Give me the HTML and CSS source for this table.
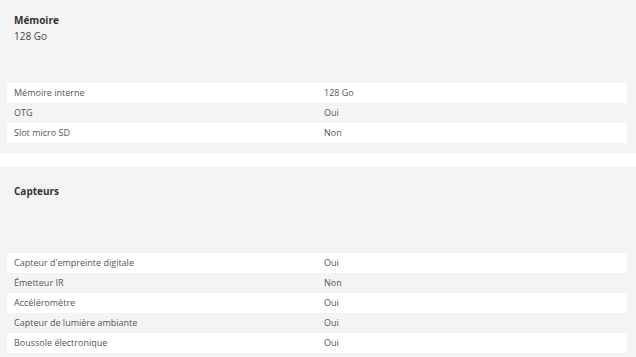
FILE: index.html
```html
<!DOCTYPE html>
<html lang="fr">
<head>
<meta charset="utf-8">
<link rel="stylesheet" href="styles.css">
</head>
<body>
<section class="spec spec-first">
  <div class="spec-head spec-head-first">
    <div class="spec-title">Mémoire</div>
    <div class="spec-sub">128 Go</div>
  </div>
  <div class="spec-rows">
    <div class="row"><div class="cell">Mémoire interne</div><div class="cell">128 Go</div></div>
    <div class="row"><div class="cell">OTG</div><div class="cell">Oui</div></div>
    <div class="row"><div class="cell">Slot micro SD</div><div class="cell">Non</div></div>
  </div>
</section>
<section class="spec spec-second">
  <div class="spec-head spec-head-second">
    <div class="spec-title">Capteurs</div>
  </div>
  <div class="spec-rows">
    <div class="row"><div class="cell">Capteur d'empreinte digitale</div><div class="cell">Oui</div></div>
    <div class="row"><div class="cell">Émetteur IR</div><div class="cell">Non</div></div>
    <div class="row"><div class="cell">Accéléromètre</div><div class="cell">Oui</div></div>
    <div class="row"><div class="cell">Capteur de lumière ambiante</div><div class="cell">Oui</div></div>
    <div class="row"><div class="cell">Boussole électronique</div><div class="cell">Oui</div></div>
  </div>
</section>
</body>
</html>
```

FILE: styles.css
```css
html, body {
  margin: 0;
  padding: 0;
  background: #ffffff;
}
body {
  font-family: "Open Sans", "Liberation Sans", sans-serif;
  color: #555555;
  overflow: hidden;
}
.spec {
  background: #f4f4f4;
  padding: 0 9px 10px 7px;
}
.spec-first {
  padding-top: 12px;
}
.spec-second {
  margin-top: 14px;
  padding-top: 16px;
}
.spec-head {
  padding-left: 7px;
}
.spec-head-first {
  height: 71px;
}
.spec-head-second {
  height: 70px;
}
.spec-title {
  font-weight: 700;
  font-size: 10px;
  line-height: 16px;
  color: #333333;
}
.spec-sub {
  font-size: 10px;
  line-height: 16px;
  color: #444444;
}
.spec-rows {
  display: flex;
  flex-direction: column;
}
.row {
  display: grid;
  grid-template-columns: 1fr 1fr;
  height: 20px;
  font-size: 9px;
  line-height: 20px;
  color: #555555;
}
.row:nth-child(odd) {
  background: #ffffff;
}
.cell {
  padding-left: 7px;
  white-space: nowrap;
}
```
